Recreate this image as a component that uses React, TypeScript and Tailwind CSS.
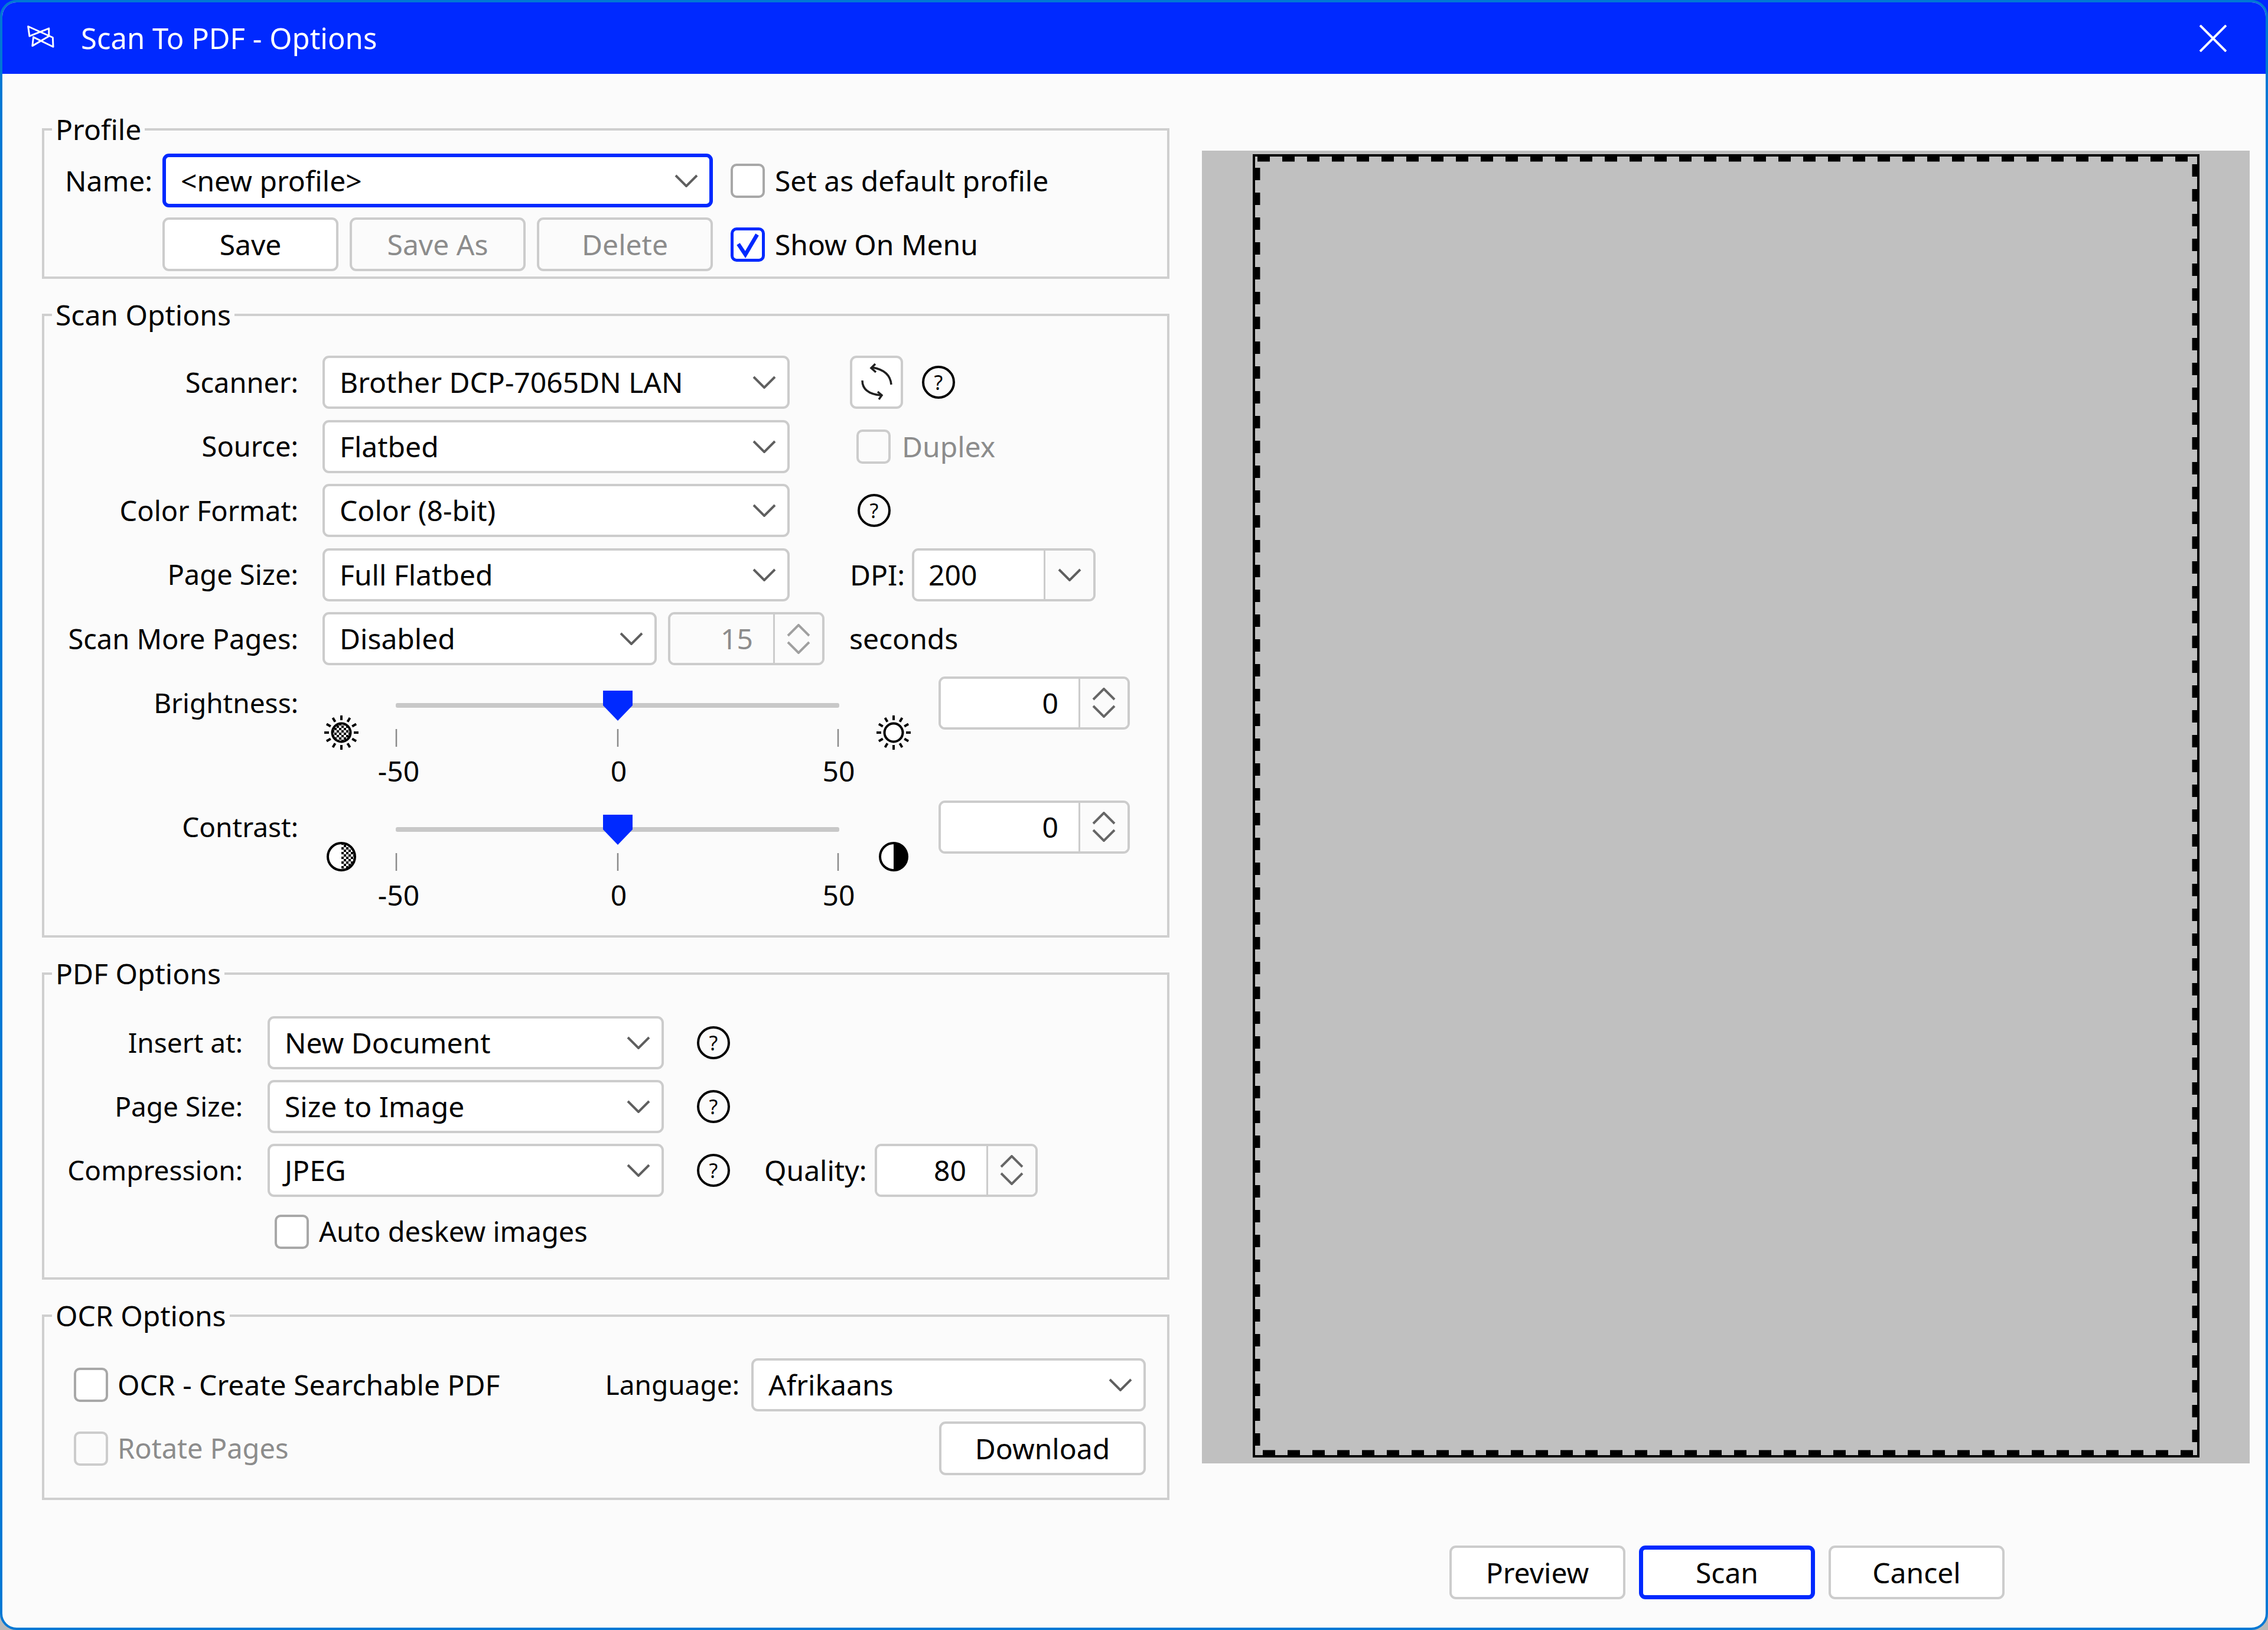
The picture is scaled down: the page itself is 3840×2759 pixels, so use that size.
import type { ReactNode } from "react";

const BLUE = "#0029ff";

function Chevron({ up = false, color = "#5f5f5f" }: { up?: boolean; color?: string }) {
    return (
        <svg width="40" height="22" viewBox="0 0 40 22" className="shrink-0">
            <polyline
                points={up ? "2,20 20,2 38,20" : "2,2 20,20 38,2"}
                fill="none"
                stroke={color}
                strokeWidth="4"
            />
        </svg>
    );
}

function Combo({ value, className, focused = false }: { value: string; className: string; focused?: boolean }) {
    return (
        <div
            className={`flex h-[90px] items-center justify-between rounded-[11px] bg-white pl-[25px] pr-[19px] ${
                focused ? "border-[6px] border-[#0029ff]" : "border-4 border-[#cccccc]"
            } ${className}`}
        >
            <span>{value}</span>
            <Chevron />
        </div>
    );
}

function Spin({ value, className, disabled = false }: { value: string; className: string; disabled?: boolean }) {
    const arrow = disabled ? "#a0a0a0" : "#666666";
    return (
        <div className={`flex h-[90px] overflow-hidden rounded-[11px] border-4 border-[#cccccc] ${className}`}>
            <div
                className={`flex flex-1 items-center justify-end pr-[34px] ${
                    disabled ? "bg-[#fbfbfb] text-[#8c8c8c]" : "bg-white"
                }`}
            >
                {value}
            </div>
            <div className="flex w-[83px] flex-col items-center justify-center gap-[7px] border-l-[3px] border-[#cccccc] bg-[#fbfbfb]">
                <Chevron up color={arrow} />
                <Chevron color={arrow} />
            </div>
        </div>
    );
}

function Button({
    label,
    className,
    disabled = false,
    focused = false,
}: {
    label: string;
    className: string;
    disabled?: boolean;
    focused?: boolean;
}) {
    return (
        <div
            className={`flex h-[91px] items-center justify-center rounded-[11px] ${
                focused ? "border-[7px] border-[#0029ff] bg-white" : "border-4 border-[#cccccc]"
            } ${disabled ? "bg-[#fbfbfb] text-[#8c8c8c]" : "bg-white"} ${className}`}
        >
            {label}
        </div>
    );
}

function Checkbox({ checked = false, disabled = false }: { checked?: boolean; disabled?: boolean }) {
    if (checked) {
        return (
            <div className="h-[58px] w-[58px] shrink-0 rounded-[10px] border-[5px] border-[#0029ff] bg-white">
                <svg width="48" height="48" viewBox="0 0 48 48">
                    <polyline points="8,23 20,41 40,7" fill="none" stroke={BLUE} strokeWidth="6.5" />
                </svg>
            </div>
        );
    }
    return (
        <div
            className={`h-[58px] w-[58px] shrink-0 rounded-[10px] border-4 ${
                disabled ? "border-[#cccccc] bg-[#fbfbfb]" : "border-[#a8a8a8] bg-white"
            }`}
        />
    );
}

function Help({ className = "" }: { className?: string }) {
    return (
        <div
            className={`flex h-[56px] w-[56px] shrink-0 items-center justify-center rounded-full border-[4px] border-black text-[34px] leading-none ${className}`}
        >
            ?
        </div>
    );
}

function Group({ title, className, children }: { title: string; className: string; children: ReactNode }) {
    return (
        <fieldset className="border-4 border-[#cfcfcf]">
            <legend className="ml-[13px] px-[6px] leading-[60px]">{title}</legend>
            <div className={className}>{children}</div>
        </fieldset>
    );
}

function AppIcon() {
    return (
        <svg width="46" height="39" viewBox="138 130 140 118" className="-mt-[4px] shrink-0">
            <path
                d="M143 135 L270 192 L272 240 L170 190 L165 235 L250 185 L250 145 L150 185 Z"
                fill="none"
                stroke="white"
                strokeWidth="9"
                strokeLinejoin="round"
            />
        </svg>
    );
}

function RefreshIcon() {
    return (
        <svg width="90" height="90" viewBox="0 0 90 90" className="absolute -left-1 -top-1">
            <g fill="none" stroke="#202020" strokeWidth="3.5">
                <path d="M70 49 Q68 25 38 20" />
                <path d="M43 14 L36 21 L44 28" />
                <path d="M21 42 Q21 64 52 67" />
                <path d="M47 61 L54 67 L49 74" />
            </g>
        </svg>
    );
}

const RAY_ANGLES = [0, 30, 60, 90, 120, 150, 180, 210, 240, 270, 300, 330];

function Sun({ dark = false }: { dark?: boolean }) {
    return (
        <svg width="64" height="64" viewBox="-32 -32 64 64" className="shrink-0">
            <defs>
                <pattern id="sunCheck" width="8" height="8" patternUnits="userSpaceOnUse">
                    <rect width="8" height="8" fill="black" />
                    <rect width="4" height="4" fill="white" />
                    <rect x="4" y="4" width="4" height="4" fill="white" />
                </pattern>
            </defs>
            <circle r="15.5" fill={dark ? "url(#sunCheck)" : "white"} stroke="black" strokeWidth="4" />
            {RAY_ANGLES.map((angle) => (
                <line key={angle} x1="0" y1="-21" x2="0" y2="-29" stroke="black" strokeWidth="4" transform={`rotate(${angle})`} />
            ))}
        </svg>
    );
}

function ContrastIcon({ dark = false }: { dark?: boolean }) {
    return (
        <svg width="64" height="64" viewBox="-32 -32 64 64" className="shrink-0">
            <defs>
                <pattern id="contrastCheck" width="8" height="8" patternUnits="userSpaceOnUse">
                    <rect width="8" height="8" fill="white" />
                    <rect width="4" height="4" fill="black" />
                    <rect x="4" y="4" width="4" height="4" fill="black" />
                </pattern>
            </defs>
            <circle r="23" fill="white" />
            <path d="M0 -23 A23 23 0 0 1 0 23 Z" fill={dark ? "black" : "url(#contrastCheck)"} />
            <circle r="23" fill="none" stroke="black" strokeWidth="4" />
        </svg>
    );
}

function SliderRow({ label, left, right }: { label: string; left: ReactNode; right: ReactNode }) {
    return (
        <div className="flex h-[210px] items-start">
            <div className="flex h-[90px] w-[430px] items-center justify-end text-[46px]">{label}</div>
            <div className="ml-[41px] flex w-[999px] flex-col">
                <div className="mt-[24px] flex">
                    <div className="mt-[39px]">{left}</div>
                    <svg width="871" height="100" viewBox="0 0 871 100" className="shrink-0">
                        <rect x="60" y="21" width="751" height="8" rx="3" fill="#c8c8c8" />
                        <path d="M411 0 H461 V25 L436 51 L411 25 Z" fill={BLUE} />
                        <g stroke="#8a8a8a" strokeWidth="2.5">
                            <line x1="61" y1="65" x2="61" y2="95" />
                            <line x1="436" y1="65" x2="436" y2="95" />
                            <line x1="809" y1="65" x2="809" y2="95" />
                        </g>
                    </svg>
                    <div className="mt-[39px]">{right}</div>
                </div>
                <div className="ml-[79px] mt-[3px] flex w-[845px] justify-between leading-[60px]">
                    <span className="w-[100px] text-center">-50</span>
                    <span className="w-[100px] text-center">0</span>
                    <span className="w-[100px] text-center">50</span>
                </div>
            </div>
            <Spin value="0" className="ml-[44px] w-[324px]" />
        </div>
    );
}

function ProfileGroup() {
    return (
        <Group title="Profile" className="pb-[9px] pl-[35px] pt-[11px]">
            <div className="flex flex-col gap-[17px]">
                <div className="flex h-[91px] items-center">
                    <span className="w-[165px]">Name:</span>
                    <Combo value="<new profile>" focused className="h-[91px] w-[932px]" />
                    <div className="ml-[30px]">
                        <Checkbox />
                    </div>
                    <span className="ml-[17px]">Set as default profile</span>
                </div>
                <div className="flex h-[91px] items-center">
                    <div className="ml-[165px] flex gap-[19px]">
                        <Button label="Save" className="w-[298px]" />
                        <Button label="Save As" disabled className="w-[298px]" />
                        <Button label="Delete" disabled className="w-[298px]" />
                    </div>
                    <div className="ml-[30px]">
                        <Checkbox checked />
                    </div>
                    <span className="ml-[17px]">Show On Menu</span>
                </div>
            </div>
        </Group>
    );
}

function ScanRow({ label, children }: { label: string; children: ReactNode }) {
    return (
        <div className="flex h-[90px] items-center">
            <span className="w-[430px] text-right text-[47px]">{label}</span>
            <div className="ml-[41px] flex items-center">{children}</div>
        </div>
    );
}

function ScanGroup() {
    return (
        <Group title="Scan Options" className="pb-[18px] pt-[39px]">
            <div className="flex flex-col gap-[18.5px]">
                <ScanRow label="Scanner:">
                    <Combo value="Brother DCP-7065DN LAN" className="w-[791px]" />
                    <div className="relative ml-[102px] h-[90px] w-[90px] rounded-[11px] border-4 border-[#cccccc] bg-white">
                        <RefreshIcon />
                    </div>
                    <Help className="ml-[32px]" />
                </ScanRow>
                <ScanRow label="Source:">
                    <Combo value="Flatbed" className="w-[791px]" />
                    <div className="ml-[113px]">
                        <Checkbox disabled />
                    </div>
                    <span className="ml-[19px] text-[#8c8c8c]">Duplex</span>
                </ScanRow>
                <ScanRow label="Color Format:">
                    <Combo value="Color (8-bit)" className="w-[791px]" />
                    <Help className="ml-[115px]" />
                </ScanRow>
                <ScanRow label="Page Size:">
                    <Combo value="Full Flatbed" className="w-[791px]" />
                    <span className="ml-[102px] w-[105px]">DPI:</span>
                    <div className="flex h-[90px] w-[311px] overflow-hidden rounded-[11px] border-4 border-[#cccccc]">
                        <div className="flex flex-1 items-center bg-white pl-[24px]">200</div>
                        <div className="flex w-[84px] items-center justify-center border-l-[3px] border-[#cccccc] bg-[#fbfbfb]">
                            <Chevron />
                        </div>
                    </div>
                </ScanRow>
                <ScanRow label="Scan More Pages:">
                    <Combo value="Disabled" className="w-[566px]" />
                    <Spin value="15" disabled className="ml-[19px] w-[265px]" />
                    <span className="ml-[42px]">seconds</span>
                </ScanRow>
                <div className="flex flex-col">
                    <SliderRow label="Brightness:" left={<Sun dark />} right={<Sun />} />
                    <SliderRow label="Contrast:" left={<ContrastIcon />} right={<ContrastIcon dark />} />
                </div>
            </div>
        </Group>
    );
}

function PdfRow({ label, children }: { label: string; children: ReactNode }) {
    return (
        <div className="flex h-[90px] items-center">
            <span className="w-[336px] text-right text-[46px]">{label}</span>
            <div className="ml-[42px] flex items-center">{children}</div>
        </div>
    );
}

function PdfGroup() {
    return (
        <Group title="PDF Options" className="pb-[48px] pt-[42px]">
            <div className="flex flex-col gap-[18px]">
                <PdfRow label="Insert at:">
                    <Combo value="New Document" className="w-[671px]" />
                    <Help className="ml-[56px]" />
                </PdfRow>
                <PdfRow label="Page Size:">
                    <Combo value="Size to Image" className="w-[671px]" />
                    <Help className="ml-[56px]" />
                </PdfRow>
                <PdfRow label="Compression:">
                    <Combo value="JPEG" className="w-[671px]" />
                    <Help className="ml-[56px]" />
                    <span className="ml-[58px] w-[187px]">Quality:</span>
                    <Spin value="80" className="w-[276px]" />
                </PdfRow>
                <div className="mt-[12px] flex h-[58px] items-center pl-[390px]">
                    <Checkbox />
                    <span className="ml-[17px] text-[47px]">Auto deskew images</span>
                </div>
            </div>
        </Group>
    );
}

function OcrGroup() {
    return (
        <Group title="OCR Options" className="pb-[38px] pl-[50px] pr-[36px] pt-[42px]">
            <div className="flex flex-col gap-[18px]">
                <div className="flex h-[90px] items-center">
                    <Checkbox />
                    <span className="ml-[16px]">OCR - Create Searchable PDF</span>
                    <span className="ml-auto mr-[20px] text-[46px]">Language:</span>
                    <Combo value="Afrikaans" className="w-[668px]" />
                </div>
                <div className="flex h-[90px] items-center">
                    <Checkbox disabled />
                    <span className="ml-[16px] text-[47px] text-[#8c8c8c]">Rotate Pages</span>
                    <Button label="Download" className="ml-auto h-[90px] w-[350px]" />
                </div>
            </div>
        </Group>
    );
}

function Preview() {
    return (
        <div className="flex h-[2222px] w-[1774px] bg-[#c0c0c0] pl-[86px] pt-[6px]">
            <div className="relative h-[2206px] w-[1603px] border-4 border-black">
                <svg className="absolute inset-0" width="1595" height="2198" viewBox="0 0 1595 2198">
                    <rect
                        x="4"
                        y="4"
                        width="1587"
                        height="2190"
                        fill="none"
                        stroke="black"
                        strokeWidth="9"
                        strokeDasharray="21 21"
                    />
                </svg>
            </div>
        </div>
    );
}

export default function App() {
    return (
        <div className="h-[2759px] w-[3840px] bg-[linear-gradient(#0029ff_50%,#b8b8b8_50%)] font-['Noto_Sans',sans-serif] text-[48px] text-black">
            <div className="flex h-full flex-col overflow-hidden rounded-[28px] border-4 border-[#0078d4] bg-[#fbfbfb]">
                <header className="flex h-[121px] shrink-0 items-center bg-[#0029ff] pl-[42px] pr-[66px] text-[49px] text-white">
                    <AppIcon />
                    <span className="ml-[45px]">Scan To PDF - Options</span>
                    <svg width="46" height="46" viewBox="0 0 46 46" className="ml-auto">
                        <path d="M1 1 L45 45 M45 1 L1 45" stroke="white" strokeWidth="4" />
                    </svg>
                </header>
                <main className="flex flex-1">
                    <div className="ml-[67px] flex w-[1909px] flex-col gap-[31px] pt-[64px]">
                        <ProfileGroup />
                        <ScanGroup />
                        <PdfGroup />
                        <OcrGroup />
                    </div>
                    <div className="ml-[55px] flex flex-col pt-[130px]">
                        <Preview />
                        <div className="ml-[419px] mt-[139px] flex gap-[23px]">
                            <Button label="Preview" className="w-[298px]" />
                            <Button label="Scan" focused className="w-[298px]" />
                            <Button label="Cancel" className="w-[298px]" />
                        </div>
                    </div>
                </main>
            </div>
        </div>
    );
}
